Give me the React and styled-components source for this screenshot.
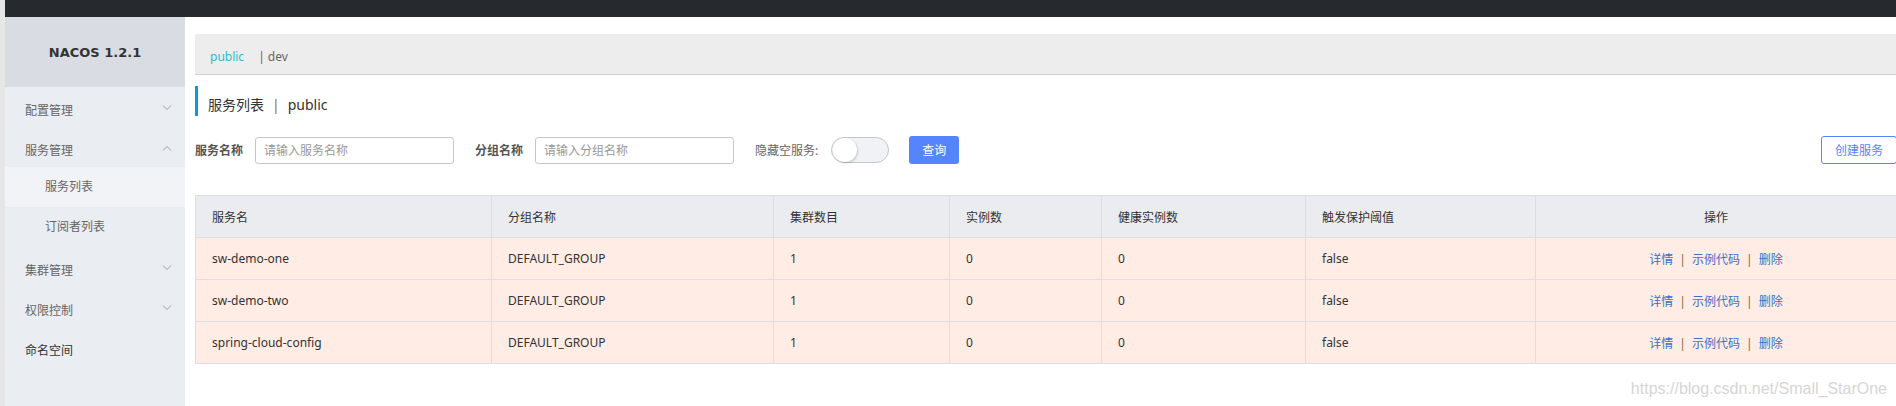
import React from 'react'
import styled, { createGlobalStyle } from 'styled-components'

const GlobalStyle = createGlobalStyle`
    body {
        margin: 0;
        background: #ffffff;
        overflow: hidden;
        font-family: "Noto Sans", "Noto Sans CJK SC", sans-serif;
        font-size: 12px;
        color: #333;
    }
`;

const menu = [
    { label: '配置管理', arrow: 'down' },
    { label: '服务管理', arrow: 'up', children: ['服务列表', '订阅者列表'], active: '服务列表' },
    { label: '集群管理', arrow: 'down' },
    { label: '权限控制', arrow: 'down' },
    { label: '命名空间', strong: true },
]

const columns = [
    { title: '服务名', width: 296 },
    { title: '分组名称', width: 282 },
    { title: '集群数目', width: 176 },
    { title: '实例数', width: 152 },
    { title: '健康实例数', width: 204 },
    { title: '触发保护阈值', width: 230 },
    { title: '操作', width: 361, center: true },
]

const rows = [
    ['sw-demo-one', 'DEFAULT_GROUP', '1', '0', '0', 'false'],
    ['sw-demo-two', 'DEFAULT_GROUP', '1', '0', '0', 'false'],
    ['spring-cloud-config', 'DEFAULT_GROUP', '1', '0', '0', 'false'],
]

const Chevron = ({ dir }) => (
    <ArrowIcon viewBox="0 0 10 6" width="10" height="6">
        <path
            d={dir === 'up' ? 'M1 5.5 L5 1.5 L9 5.5' : 'M1 0.5 L5 4.5 L9 0.5'}
            fill="none"
            stroke="#9aa0a8"
            strokeWidth="1"
        />
    </ArrowIcon>
)

const App = () => {
    return (
        <Page>
            <GlobalStyle />
            <TopBar />
            <Body>
                <Sidebar>
                    <Brand>NACOS 1.2.1</Brand>
                    <Menu>
                        {menu.map((item) => (
                            <React.Fragment key={item.label}>
                                <MenuItem $strong={item.strong}>
                                    {item.label}
                                    {item.arrow && <Chevron dir={item.arrow} />}
                                </MenuItem>
                                {item.children && (
                                    <SubMenu>
                                        {item.children.map((c) => (
                                            <SubItem key={c} $active={c === item.active}>{c}</SubItem>
                                        ))}
                                    </SubMenu>
                                )}
                            </React.Fragment>
                        ))}
                    </Menu>
                </Sidebar>
                <Main>
                    <NamespaceBar>
                        <NsLink $active>public</NsLink>
                        <NsLink>| dev</NsLink>
                    </NamespaceBar>
                    <PageTitle>
                        服务列表<TitleSep>|</TitleSep>public
                    </PageTitle>
                    <SearchRow>
                        <FieldLabel>服务名称</FieldLabel>
                        <SearchInput placeholder="请输入服务名称" />
                        <FieldLabel $gap>分组名称</FieldLabel>
                        <SearchInput placeholder="请输入分组名称" />
                        <SwitchLabel>隐藏空服务:</SwitchLabel>
                        <Switch><Knob /></Switch>
                        <PrimaryButton>查询</PrimaryButton>
                        <OutlineButton>创建服务</OutlineButton>
                    </SearchRow>
                    <Table>
                        <colgroup>
                            {columns.map((c) => <col key={c.title} style={{ width: c.width }} />)}
                        </colgroup>
                        <thead>
                            <tr>
                                {columns.map((c) => (
                                    <HeadCell key={c.title} $center={c.center}>{c.title}</HeadCell>
                                ))}
                            </tr>
                        </thead>
                        <tbody>
                            {rows.map((r) => (
                                <tr key={r[0]}>
                                    {r.map((v, i) => <Cell key={i}>{v}</Cell>)}
                                    <Cell $center>
                                        <ActionLink>详情</ActionLink>
                                        <ActionSep>|</ActionSep>
                                        <ActionLink>示例代码</ActionLink>
                                        <ActionSep>|</ActionSep>
                                        <ActionLink>删除</ActionLink>
                                    </Cell>
                                </tr>
                            ))}
                        </tbody>
                    </Table>
                </Main>
            </Body>
            <Watermark>https://blog.csdn.net/Small_StarOne</Watermark>
        </Page>
    );
}

export default App

const Page = styled.div`
    position: relative;
    height: 406px;
    border-left: 5px solid #e6e6e6;
    display: flex;
    flex-direction: column;
`;

const TopBar = styled.div`
    height: 17px;
    background: #262a2f;
    flex-shrink: 0;
`;

const Body = styled.div`
    display: flex;
    flex: 1;
`;

const Sidebar = styled.div`
    width: 180px;
    flex-shrink: 0;
    background: #eaedf1;
`;

const Brand = styled.div`
    height: 70px;
    background: #d9dde3;
    display: flex;
    align-items: center;
    justify-content: center;
    font-family: "DejaVu Sans", "Noto Sans", sans-serif;
    font-size: 13px;
    font-weight: bold;
    color: #333;
`;

const Menu = styled.div`
    padding-top: 3px;
`;

const MenuItem = styled.div`
    height: 40px;
    display: flex;
    align-items: center;
    justify-content: space-between;
    padding: 0 13px 0 20px;
    color: ${(p) => (p.$strong ? '#333' : '#666')};
`;

const ArrowIcon = styled.svg`
    display: block;
    margin-top: -4px;
`;

const SubMenu = styled.div`
    margin-top: -3px;
    padding-bottom: 3px;
`;

const SubItem = styled.div`
    height: 40px;
    line-height: 40px;
    padding-left: 40px;
    color: #666;
    background: ${(p) => (p.$active ? '#f2f3f7' : 'transparent')};
`;

const Main = styled.div`
    width: 1702px;
    flex-shrink: 0;
    padding: 17px 0 0 10px;
`;

const NamespaceBar = styled.div`
    height: 41px;
    background: #ededed;
    border-bottom: 1px solid #d0d0d0;
    display: flex;
    align-items: center;
    gap: 14px;
    padding: 5px 0 0 15px;
    box-sizing: border-box;
`;

const NsLink = styled.span`
    color: ${(p) => (p.$active ? '#2fb9d8' : '#666')};
`;

const PageTitle = styled.div`
    margin-top: 11px;
    height: 30px;
    border-left: 3px solid #0d9bd0;
    box-sizing: border-box;
    padding: 8px 0 0 10px;
    font-size: 14px;
    line-height: 22px;
    color: #333;
`;

const TitleSep = styled.span`
    margin: 0 8px;
    color: #8a6a3a;
`;

const SearchRow = styled.div`
    margin-top: 20px;
    display: flex;
    align-items: center;
    height: 28px;
`;

const FieldLabel = styled.span`
    font-weight: bold;
    color: #555;
    margin-left: ${(p) => (p.$gap ? '21px' : '0')};
    margin-right: 12px;
`;

const SearchInput = styled.input`
    width: 199px;
    height: 27px;
    box-sizing: border-box;
    border: 1px solid #c4c6cf;
    border-radius: 3px;
    padding: 0 8px;
    font-family: inherit;
    font-size: 12px;
    outline: none;
    &::placeholder {
        color: #999;
    }
`;

const SwitchLabel = styled.span`
    margin-left: 21px;
    margin-right: 13px;
    color: #666;
`;

const Switch = styled.div`
    width: 58px;
    height: 26px;
    box-sizing: border-box;
    border: 1px solid #c4c6cf;
    border-radius: 13px;
    background: #f1f2f6;
    display: flex;
    align-items: center;
    padding-left: 1px;
`;

const Knob = styled.div`
    width: 24px;
    height: 24px;
    border-radius: 50%;
    background: #fff;
    box-shadow: 1px 1px 2px rgba(0, 0, 0, 0.18);
`;

const PrimaryButton = styled.button`
    margin-left: 20px;
    width: 50px;
    height: 28px;
    border: none;
    border-radius: 3px;
    background: #5584ff;
    color: #fff;
    font-family: inherit;
    font-size: 12px;
`;

const OutlineButton = styled.button`
    margin-left: auto;
    width: 76px;
    height: 28px;
    border: 1px solid #5584ff;
    border-radius: 3px;
    background: #fff;
    color: #5584ff;
    font-family: inherit;
    font-size: 12px;
`;

const Table = styled.table`
    margin-top: 31px;
    width: 1702px;
    border-collapse: collapse;
    table-layout: fixed;
    border: 1px solid #dcdee3;
`;

const HeadCell = styled.th`
    height: 41px;
    padding: 0 16px;
    background: #ebecf0;
    border: 1px solid #dcdee3;
    font-weight: normal;
    text-align: ${(p) => (p.$center ? 'center' : 'left')};
    color: #333;
`;

const Cell = styled.td`
    height: 41px;
    padding: 0 16px;
    background: #ffece4;
    border: 1px solid #dcdee3;
    text-align: ${(p) => (p.$center ? 'center' : 'left')};
    color: #333;
`;

const ActionLink = styled.a`
    color: #3a6fcc;
    cursor: pointer;
`;

const ActionSep = styled.span`
    margin: 0 6px;
    color: #8a6a3a;
`;

const Watermark = styled.div`
    position: absolute;
    right: 9px;
    bottom: 8px;
    font-family: "Liberation Sans", Arial, sans-serif;
    font-size: 16px;
    color: #d6d6d6;
`;
